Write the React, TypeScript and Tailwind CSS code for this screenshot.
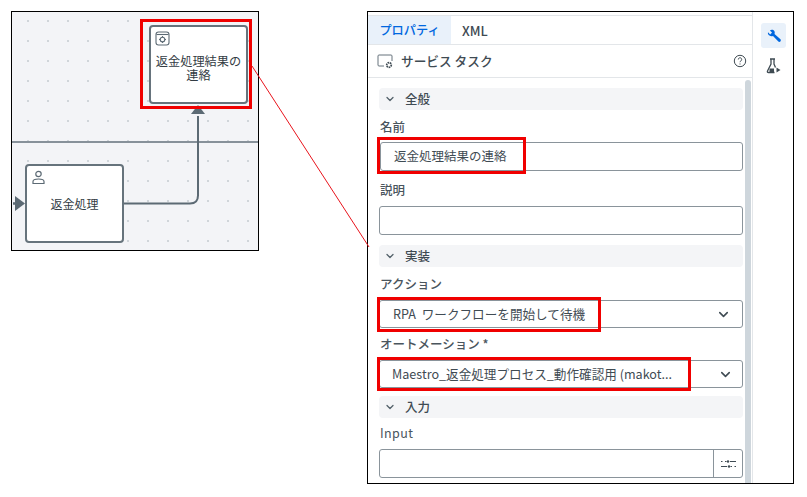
import React from "react";
import { ChevronDown } from "lucide-react";

const font = "font-['Noto_Sans_CJK_JP','Noto_Sans',sans-serif]";

const Section = ({ title, className = "" }: { title: string; className?: string }) => (
  <div className={`ml-[11px] flex h-[22px] w-[364px] items-center rounded bg-[#f4f5f7] pl-[5px] ${className}`}>
    <ChevronDown className="h-3 w-3 text-[#526069]" strokeWidth={2.5} />
    <span className="ml-[9px] text-[12.500px] font-medium leading-none text-[#3f4b53]">{title}</span>
  </div>
);

const Label = ({ children, className = "" }: { children: React.ReactNode; className?: string }) => (
  <div className={`ml-[12px] text-[12.500px] font-medium leading-[16px] text-[#4a555d] ${className}`}>{children}</div>
);

const Mark = ({ className }: { className: string }) => (
  <div className={`pointer-events-none absolute border-[3px] border-[#f00000] ${className}`} />
);

const Select = ({ text, className = "", pad = "pl-[14px]", arrow = "mr-[11px]", textClass = "" }: { text: string; className?: string; pad?: string; arrow?: string; textClass?: string }) => (
  <div className={`ml-[11px] flex h-[28px] w-[364px] items-center justify-between rounded-[3px] border border-[#8a949b] bg-white ${pad} ${className}`}>
    <span className={`text-[12.600px] leading-none text-[#3f4b53] ${textClass}`}>{text}</span>
    <ChevronDown className={`h-[15px] w-[15px] text-[#3f4b53] ${arrow}`} strokeWidth={2.5} />
  </div>
);

const dots = "bg-[radial-gradient(circle,#cfd4d9_0.7px,transparent_1px)] bg-[length:20px_20px] bg-[position:6px_-1px]";

export default function App() {
  return (
    <div className={`relative flex h-[497px] w-[807px] items-start overflow-hidden bg-white pl-[11px] pt-[11px] ${font}`}>
      {/* canvas */}
      <div className={`relative h-[240px] w-[248px] shrink-0 overflow-hidden border border-black bg-[#f3f4f7] ${dots}`}>
        <div className="absolute left-0 top-[129px] h-[2px] w-full bg-[#87919a]" />
        {/* connector */}
        <svg className="absolute left-0 top-0" width="248" height="240" fill="none">
          <path d="M111 191.500 H178 Q186 191.500 186 183.500 V104" stroke="#5c6a74" strokeWidth="2" />
          <path d="M179 102 L193 102 L186 93 Z" fill="#5c6a74" />
          <path d="M1 191.500 H6" stroke="#5c6a74" strokeWidth="2.500" />
          <path d="M3 184 L13 191.500 L3 199 Z" fill="#5c6a74" />
        </svg>
        {/* service task */}
        <div className="absolute left-[137px] top-[13px] flex h-[79px] w-[99px] flex-col items-center rounded-[4px] border-2 border-[#66737c] bg-white">
          <svg className="absolute left-[4px] top-[4px]" width="15" height="15" viewBox="0 0 15 15" fill="none" stroke="#5c6a74" strokeWidth="1.100">
            <rect x="1" y="1" width="13" height="13" rx="2.500" />
            <path d="M1.500 3.500h12" />
            <circle cx="7.500" cy="8.500" r="2.300" />
            <path d="M7.500 5v1.200M7.500 10.800V12M4 8.500h1.200M9.800 8.500H11" />
          </svg>
          <div className="mt-[27px] text-center text-[12.200px] leading-[14px] text-[#333c44]">
            返金処理結果の
            <br />
            連絡
          </div>
        </div>
        {/* user task */}
        <div className="absolute left-[13px] top-[152px] flex h-[79px] w-[99px] items-center justify-center rounded-[4px] border-2 border-[#66737c] bg-white">
          <svg className="absolute left-[5px] top-[4px]" width="13" height="15" viewBox="0 0 13 15" fill="none" stroke="#5c6a74" strokeWidth="1.200">
            <circle cx="6.500" cy="4" r="2.700" />
            <path d="M1 13.500v-2c0-1.500 1.500-2.500 5.500-2.500s5.500 1 5.500 2.500v2z" />
          </svg>
          <span className="text-[12px] leading-none text-[#333c44]">返金処理</span>
        </div>
      </div>
      <Mark className="left-[140px] top-[19px] h-[90px] w-[112px]" />

      {/* properties panel */}
      <div className="ml-[108px] flex h-[473px] w-[427px] shrink-0 overflow-hidden border border-black bg-white">
        <div className="relative w-[385px] shrink-0 border-r border-[#e3e6e9] pt-[3px]">
          <div className="flex h-[30px] border-y border-[#e3e6e9]">
            <div className="flex w-[83px] items-center justify-center bg-[#e9f1fa] text-[12.200px] font-medium leading-none text-[#0067df]">プロパティ</div>
            <div className="ml-[11px] flex items-center text-[13px] font-medium leading-none text-[#3f4b53]">XML</div>
          </div>
          <div className="flex h-[33px] items-center border-b border-[#e3e6e9] pl-[9px] pr-[5px]">
            <svg width="17" height="15" viewBox="0 0 17 15" fill="none" stroke="#66737c" strokeWidth="1">
              <path d="M7 12H2a1 1 0 0 1-1-1V2a1 1 0 0 1 1-1h12a1 1 0 0 1 1 1v5" />
              <circle cx="12" cy="11" r="2.300" strokeWidth="1.700" strokeDasharray="1.500 0.600" stroke="#3f4b53" />
            </svg>
            <span className="ml-[7px] text-[12.700px] font-medium leading-none text-[#3f4b53]">サービス タスク</span>
            <svg className="ml-auto" width="14" height="14" viewBox="0 0 14 14" fill="none" stroke="#3f4b53" strokeWidth="1">
              <circle cx="7" cy="7" r="5.700" />
              <path d="M5.300 5.500a1.700 1.700 0 1 1 2.600 1.400c-.6.400-.9.700-.9 1.300M7 9.500v1" />
            </svg>
          </div>
          {/* scrollbar */}
          <div className="absolute left-[377px] top-[68px] h-[404px] w-[6px] rounded-t-[3px] bg-[#ced6dc]" />
          <Section title="全般" className="mt-[10px]" />
          <Label className="mt-[9px]">名前</Label>
          <div className="ml-[12px] mt-[7px] flex h-[29px] w-[363px] items-center rounded-[3px] border border-[#8a949b] pl-[13px] text-[12.500px] leading-none text-[#3f4b53]">返金処理結果の連絡</div>
          <Label className="mt-[11px]">説明</Label>
          <div className="ml-[11px] mt-[8px] h-[29px] w-[364px] rounded-[3px] border border-[#8a949b]" />
          <Section title="実装" className="mt-[10px]" />
          <Label className="mt-[9px]">アクション</Label>
          <Select text="RPA ワークフローを開始して待機" className="mt-[8px]" pad="pl-[13px]" textClass="[word-spacing:3px]" />
          <Label className="mt-[8px]">オートメーション *</Label>
          <Select text="Maestro_返金処理プロセス_動作確認用 (makot..." className="mt-[8px]" pad="pl-[12px]" arrow="mr-[9px]" />
          <Section title="入力" className="mt-[8px]" />
          <Label className="mt-[7px] font-normal tracking-[0.4px]">Input</Label>
          <div className="ml-[11px] mt-[8px] flex h-[29px] w-[364px] rounded-[3px] border border-[#8a949b]">
            <div className="flex-1" />
            <div className="flex w-[29px] items-center justify-center border-l border-[#8a949b]">
              <svg width="15" height="8" viewBox="0 0 15 8" fill="none" stroke="#3f4b53" strokeWidth="1.200">
                <path d="M0 1.500h1.500M4 1.500h1.500M9 1.500h6M0 6.500h6M9.500 6.500h1.500M13.500 6.500H15" />
                <circle cx="7" cy="1.500" r="1.200" fill="#3f4b53" stroke="none" />
                <circle cx="8" cy="6.500" r="1.200" fill="#3f4b53" stroke="none" />
              </svg>
            </div>
          </div>
        </div>
        {/* right rail */}
        <div className="flex flex-1 flex-col items-center pl-[1px] pt-[11px]">
          <div className="flex h-[25px] w-[25px] items-center justify-center rounded-[3px] bg-[#e9f1fa]">
            <svg width="14" height="14" viewBox="0 0 14 14" fill="#0067df">
              <path d="M1 3.200 3.200 5.400 5 3.600 2.900 1.400C4.500.3 6.500.7 7.300 2c.6 1 .6 2 .2 2.900l5.700 5.200c.8.800.8 1.600.2 2.300-.7.700-1.600.6-2.300-.1L6 6.900c-1.100.5-2.500.4-3.500-.3C1.200 5.700.6 4.500 1 3.200Z" />
            </svg>
          </div>
          <svg className="mt-[10px]" width="15" height="16" viewBox="0 0 15 16" fill="none" stroke="#3f4b53" strokeWidth="1.300">
            <path d="M4 1h5M5 1v5L1.500 13c-.4.800 0 1.500 1 1.500h6M8 1v5l1.500 3.500" />
            <path d="M10.500 9.500v5l4-2.500z" fill="#3f4b53" stroke="none" />
            <path d="M3.500 10.500h4.500v4h-4.500z" fill="#3f4b53" stroke="none" />
          </svg>
        </div>
      </div>
      <Mark className="left-[377px] top-[137px] h-[37px] w-[149px]" />
      <Mark className="left-[377px] top-[297px] h-[35px] w-[224px]" />
      <Mark className="left-[377px] top-[357px] h-[34px] w-[314px]" />

      {/* callout line */}
      <svg className="pointer-events-none absolute left-0 top-0" width="807" height="497" fill="none">
        <path d="M252 66 L369 247" stroke="#e8141c" strokeWidth="1" />
      </svg>
    </div>
  );
}
